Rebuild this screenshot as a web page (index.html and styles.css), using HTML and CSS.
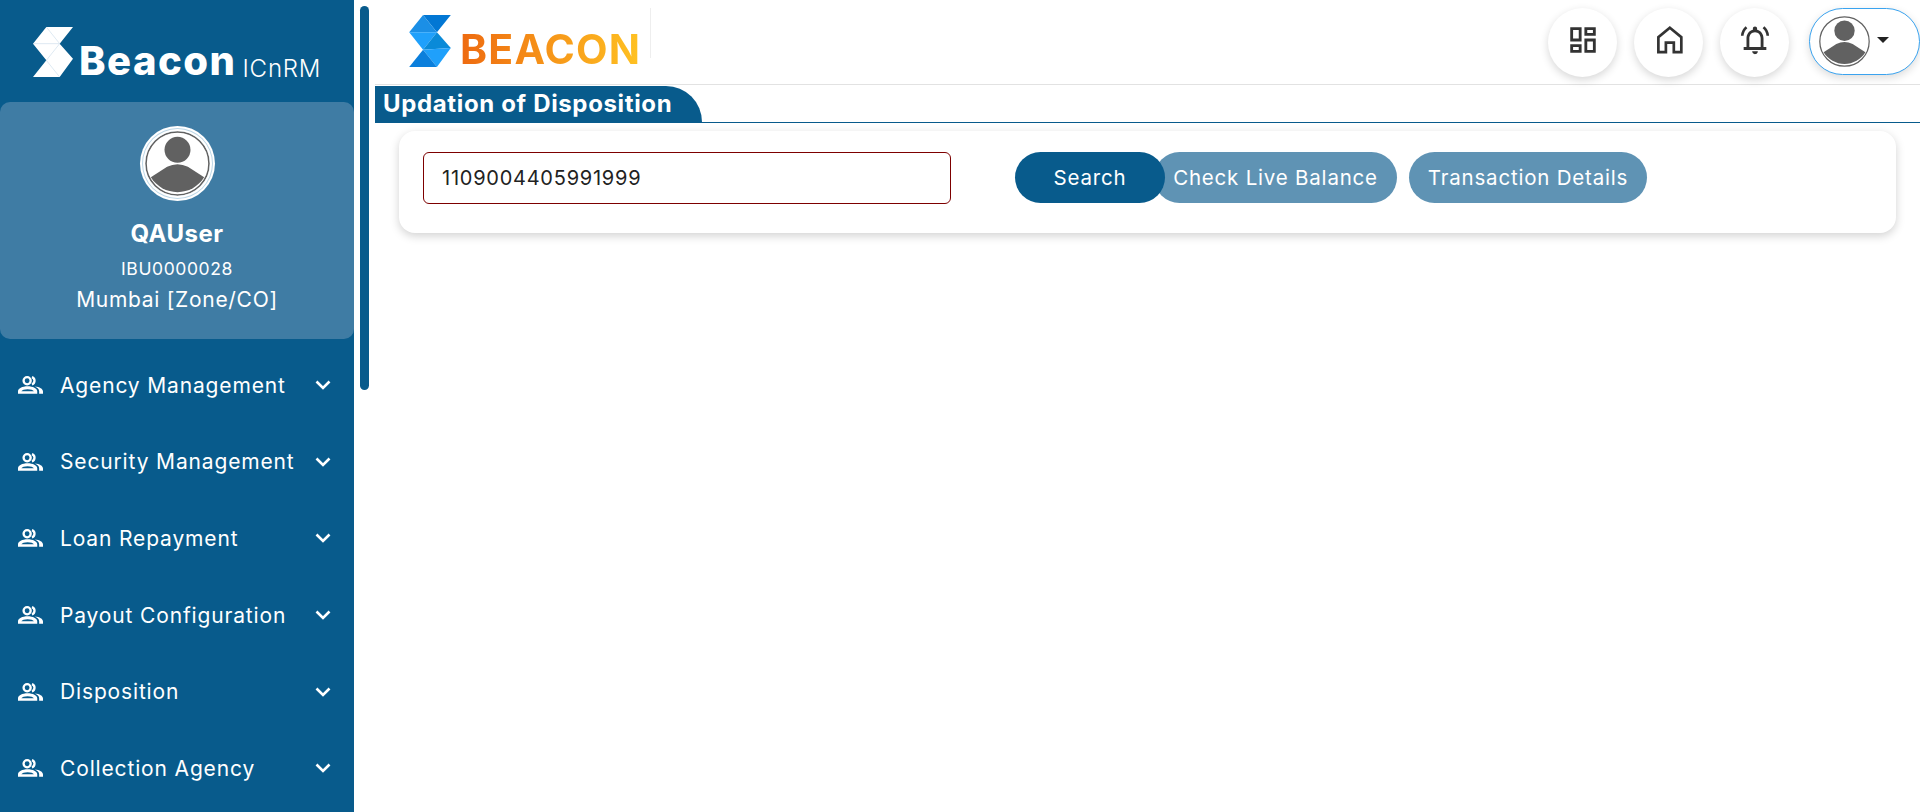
FILE: index.html
```html
<!DOCTYPE html>
<html lang="en">
<head>
    <meta charset="UTF-8">
    <title>Updation of Disposition</title>
    <link rel="stylesheet" href="styles.css">
</head>
<body>
    <svg class="icon-defs" width="0" height="0">
        <symbol id="people" viewBox="0 0 26 18">
            <circle cx="9.5" cy="4.6" r="3.700" fill="none" stroke="#fff" stroke-width="2.400"/>
            <path fill-rule="evenodd" d="M0 18v-2.500C0 12.500 4.500 10.300 10 10.300s10 2.200 10 5.200V18zM3.500 15.600h13c-.7-1.300-3.200-2.200-6.500-2.200s-5.800.9-6.500 2.200z" fill="#fff"/>
            <path d="M14.500.9a3.900 3.900 0 0 1 0 7.400" fill="none" stroke="#fff" stroke-width="2.400"/>
            <path d="M17.500 10.600c5 .5 8.500 2.400 8.500 5.200V18h-4v-2.500c0-2-1.800-3.600-4.500-4.900z" fill="#fff"/>
        </symbol>
        <symbol id="chevron" viewBox="0 0 16 10">
            <path d="M1.500 1.500 8 8l6.500-6.500" fill="none" stroke="#fff" stroke-width="2.600"/>
        </symbol>
        <symbol id="avatar" viewBox="0 0 50 50">
            <circle cx="25" cy="25" r="24.200" fill="#fff" stroke="#616161" stroke-width="1.200"/>
            <circle cx="25" cy="14.500" r="10" fill="#616161"/>
            <path d="M4.500 35.500 17 27.500q8-4 16 0L45.500 35.500A24 24 0 0 1 4.500 35.500z" fill="#616161"/>
        </symbol>
    </svg>

    <div class="app">
        <aside class="sidebar">
            <div class="brand">
                <svg class="brand-mark" viewBox="40 35 120 150">
                    <polygon points="80,35 160,35 120,85 160,130 120,185 40,185 80,135 40,85" fill="#fff"/>
                    <path d="M40 85H120M80 35l40 50M80 135l40-50M80 135l40 50" fill="none" stroke="#bcd3e4" stroke-width="1.500"/>
                </svg>
                <span class="brand-name">Beacon</span>
                <span class="brand-sub">ICnRM</span>
            </div>

            <div class="profile">
                <div class="profile-pic">
                    <svg><use href="#avatar"/></svg>
                </div>
                <div class="profile-name">QAUser</div>
                <div class="profile-id">IBU0000028</div>
                <div class="profile-zone">Mumbai [Zone/CO]</div>
            </div>

            <nav class="menu">
                <a class="menu-item"><svg class="menu-icon"><use href="#people"/></svg><span class="menu-label">Agency Management</span><svg class="menu-arrow"><use href="#chevron"/></svg></a>
                <a class="menu-item"><svg class="menu-icon"><use href="#people"/></svg><span class="menu-label">Security Management</span><svg class="menu-arrow"><use href="#chevron"/></svg></a>
                <a class="menu-item"><svg class="menu-icon"><use href="#people"/></svg><span class="menu-label">Loan Repayment</span><svg class="menu-arrow"><use href="#chevron"/></svg></a>
                <a class="menu-item"><svg class="menu-icon"><use href="#people"/></svg><span class="menu-label">Payout Configuration</span><svg class="menu-arrow"><use href="#chevron"/></svg></a>
                <a class="menu-item"><svg class="menu-icon"><use href="#people"/></svg><span class="menu-label">Disposition</span><svg class="menu-arrow"><use href="#chevron"/></svg></a>
                <a class="menu-item"><svg class="menu-icon"><use href="#people"/></svg><span class="menu-label">Collection Agency</span><svg class="menu-arrow"><use href="#chevron"/></svg></a>
            </nav>
        </aside>

        <div class="rail"><div class="rail-thumb"></div></div>

        <div class="main">
            <header class="topbar">
                <div class="logo">
                    <svg class="logo-mark" viewBox="40 35 120 150">
                        <polygon points="80,35 160,35 120,85" fill="#0277d4"/>
                        <polygon points="80,35 120,85 40,85" fill="#1b8fe6"/>
                        <polygon points="40,85 120,85 80,135" fill="#1fa0fb"/>
                        <polygon points="120,85 160,130 80,135" fill="#0a8ad8"/>
                        <polygon points="80,135 160,130 120,185" fill="#1fa0fb"/>
                        <polygon points="80,135 120,185 40,185" fill="#0b7fdc"/>
                    </svg>
                    <span class="logo-text">BEACON</span>
                </div>
                <div class="top-actions">
                    <button class="round-btn">
                        <svg viewBox="0 0 24 24"><path d="M19 5v2h-4V5h4M9 5v6H5V5h4m10 8v6h-4v-6h4M9 17v2H5v-2h4M21 3h-8v6h8V3zM11 3H3v10h8V3zm10 8h-8v10h8V11zm-10 4H3v6h8v-6z"/></svg>
                    </button>
                    <button class="round-btn">
                        <svg viewBox="0 0 24 24"><path class="stroke-only" d="M12.600 3.400 20.700 10V20.500H15.400V13.800H9.800V20.500H4.500V10z"/></svg>
                    </button>
                    <button class="round-btn">
                        <svg viewBox="0 0 24 24">
                            <path class="stroke-only" d="M3 9C3.200 6.500 4.200 4.500 6 3M21 9C20.800 6.500 19.800 4.500 18 3"/>
                            <path d="M18 11c0-3.070-1.640-5.640-4.500-6.320V4c0-.83-.67-1.500-1.500-1.500s-1.500.67-1.500 1.500v.68C7.630 5.360 6 7.920 6 11v6H4v2h16v-2h-2v-6zm-2 6H8v-6c0-2.480 1.510-4.500 4-4.500s4 2.020 4 4.500v6zm-4 5c.14 0 .27-.01.4-.04.65-.14 1.180-.58 1.440-1.180.1-.24.15-.5.15-.78h-4c.01 1.100.9 2 2.010 2z"/>
                        </svg>
                    </button>
                    <button class="user-btn">
                        <svg class="user-pic"><use href="#avatar"/></svg>
                        <span class="caret"></span>
                    </button>
                </div>
            </header>

            <div class="tab-row">
                <h2 class="tab-title">Updation of Disposition</h2>
            </div>

            <section class="card">
                <input class="account-input" type="text" value="1109004405991999">
                <div class="card-actions">
                    <button class="btn btn-search">Search</button>
                    <button class="btn btn-live">Check Live Balance</button>
                    <button class="btn btn-txn">Transaction Details</button>
                </div>
            </section>
        </div>
    </div>
</body>
</html>
```

FILE: styles.css
```css
* {
    box-sizing: border-box;
}
html, body {
    height: 100%;
}
body {
    margin: 0;
    font-family: Inter, "Open Sans", sans-serif;
    background: #fff;
    overflow: hidden;
}
.icon-defs {
    display: block;
    height: 0;
}
.app {
    display: flex;
    height: 812px;
}

/* sidebar */
.sidebar {
    width: 354px;
    flex-shrink: 0;
    background-color: #085b8c;
    color: #fff;
    overflow: hidden;
}
.brand {
    height: 102px;
    display: flex;
    align-items: flex-start;
    padding: 27px 0 0 33px;
}
.brand-mark {
    width: 40px;
    height: 50px;
}
.brand-name {
    font-size: 40px;
    font-weight: 800;
    line-height: 46px;
    margin: 11px 0 0 6px;
    letter-spacing: 1.5px;
}
.brand-sub {
    font-size: 24px;
    font-weight: 300;
    line-height: 28px;
    margin: 28px 0 0 6px;
    letter-spacing: 0.8px;
}
.profile {
    height: 237px;
    background-color: #3f7ca4;
    border-radius: 10px;
    display: flex;
    flex-direction: column;
    align-items: center;
    padding-top: 24px;
}
.profile-pic {
    width: 75px;
    height: 75px;
    border-radius: 50%;
    background: #fff;
    padding: 5px;
}
.profile-pic svg {
    display: block;
    width: 65px;
    height: 65px;
    border-radius: 50%;
    box-shadow: 0 0 0 2px #fff, 0 0 0 3px #bcd6e6;
}
.profile-name {
    font-size: 24px;
    font-weight: 700;
    line-height: 28px;
    margin-top: 19px;
    letter-spacing: 0.5px;
}
.profile-id {
    font-size: 17.5px;
    line-height: 20px;
    margin-top: 11px;
    letter-spacing: 0.6px;
}
.profile-zone {
    font-size: 21px;
    line-height: 24px;
    margin-top: 9px;
    letter-spacing: 0.7px;
}
.menu {
    display: flex;
    flex-direction: column;
    padding-top: 8px;
}
.menu-item {
    height: 76.6px;
    display: flex;
    align-items: center;
    padding-left: 18px;
    color: #fff;
}
.menu-icon {
    width: 25px;
    height: 18px;
    flex-shrink: 0;
}
.menu-label {
    font-size: 21px;
    letter-spacing: 0.85px;
    margin-left: 17px;
    width: 255px;
    white-space: nowrap;
}
.menu-arrow {
    width: 16px;
    height: 10px;
    flex-shrink: 0;
}

/* scroll rail between sidebar and page */
.rail {
    width: 21px;
    flex-shrink: 0;
    padding: 6px 0 0 6px;
}
.rail-thumb {
    width: 9px;
    height: 384px;
    background-color: #085b8c;
    border-radius: 5px;
}

/* main */
.main {
    flex: 1;
    min-width: 0;
}
.topbar {
    height: 85px;
    border-bottom: 1px solid #e2e2e2;
    display: flex;
    justify-content: space-between;
    padding: 8px 0 0 33px;
}
.logo {
    width: 243px;
    height: 50px;
    border-right: 1px solid #eee;
    display: flex;
    align-items: flex-start;
    padding-top: 7px;
}
.logo-mark {
    width: 44px;
    height: 52px;
    flex-shrink: 0;
}
.logo-text {
    font-size: 41px;
    font-weight: 700;
    line-height: 50px;
    margin: 9px 0 0 8px;
    background: linear-gradient(90deg, #ee6a10, #ffc222);
    -webkit-background-clip: text;
    background-clip: text;
    color: transparent;
    letter-spacing: 1.2px;
}
.top-actions {
    display: flex;
    align-items: flex-start;
    gap: 17px;
}
.round-btn {
    width: 69px;
    height: 69px;
    border: 0;
    border-radius: 50%;
    background: #fff;
    box-shadow: 0 3px 8px rgba(0, 0, 0, 0.16);
    padding: 0 0 5px;
    display: flex;
    align-items: center;
    justify-content: center;
}
.round-btn svg {
    width: 34px;
    height: 34px;
    fill: #333;
}
.round-btn .stroke-only {
    fill: none;
    stroke: #333;
    stroke-width: 1.9;
}
.user-btn {
    width: 111px;
    height: 67px;
    margin-left: 3px;
    border: 1px solid #3aa3ef;
    border-radius: 34px;
    background: #fff;
    box-shadow: 0 3px 8px rgba(0, 0, 0, 0.14);
    padding: 0 0 0 9px;
    display: flex;
    align-items: center;
}
.user-pic {
    width: 51px;
    height: 51px;
    flex-shrink: 0;
}
.caret {
    width: 0;
    height: 0;
    margin: -4px 0 0 7px;
    border-left: 6px solid transparent;
    border-right: 6px solid transparent;
    border-top: 6px solid #222;
}
.tab-row {
    height: 37px;
    margin-top: 1px;
    border-bottom: 1px solid #085b8c;
}
.tab-title {
    margin: 0;
    width: 327px;
    height: 37px;
    padding-left: 8px;
    background-color: #085b8c;
    border-top-right-radius: 36px 36px;
    color: #fff;
    font-size: 24px;
    font-weight: 700;
    line-height: 36px;
    letter-spacing: 0.65px;
    white-space: nowrap;
}
.card {
    margin: 8px 24px 0;
    height: 102px;
    border-radius: 16px;
    background: #fff;
    box-shadow: 0 3px 10px rgba(0, 0, 0, 0.18);
    display: flex;
    align-items: flex-start;
    padding: 21px 0 0 24px;
}
.account-input {
    width: 528px;
    height: 52px;
    border: 1px solid #7d0000;
    border-radius: 6px;
    padding: 0 18px;
    font-family: inherit;
    font-size: 20px;
    letter-spacing: 0.75px;
    color: #222;
    outline: none;
}
.card-actions {
    display: flex;
    margin-left: 64px;
}
.btn {
    height: 51px;
    border: 0;
    border-radius: 26px;
    color: #fff;
    font-family: inherit;
    font-size: 20.5px;
    letter-spacing: 0.8px;
    white-space: nowrap;
    padding: 0;
}
.btn-search {
    width: 150px;
    background-color: #085b8c;
    position: relative;
    z-index: 1;
}
.btn-live {
    width: 243px;
    margin-left: -11px;
    background-color: #5f93b4;
}
.btn-txn {
    width: 238px;
    margin-left: 12px;
    background-color: #5f93b4;
}
```
